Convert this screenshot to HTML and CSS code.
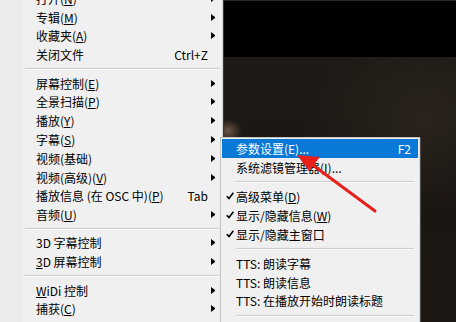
FILE: index.html
```html
<!DOCTYPE html>
<html>
<head>
<meta charset="utf-8">
<link rel="stylesheet" href="styles.css">
</head>
<body>
<div class="screen">
  <div class="gutter"></div>
  <div class="menu main">
    <div class="list">
      <div class="item"><span class="label">打开(<u>N</u>)</span><span class="sub-arrow"></span></div>
      <div class="item"><span class="label">专辑(<u>M</u>)</span><span class="sub-arrow"></span></div>
      <div class="item"><span class="label">收藏夹(<u>A</u>)</span><span class="sub-arrow"></span></div>
      <div class="item"><span class="label">关闭文件</span><span class="key">Ctrl+Z</span><span class="no-arrow"></span></div>
      <div class="sep"></div>
      <div class="item"><span class="label">屏幕控制(<u>E</u>)</span><span class="sub-arrow"></span></div>
      <div class="item"><span class="label">全景扫描(<u>P</u>)</span><span class="sub-arrow"></span></div>
      <div class="item"><span class="label">播放(<u>Y</u>)</span><span class="sub-arrow"></span></div>
      <div class="item"><span class="label">字幕(<u>S</u>)</span><span class="sub-arrow"></span></div>
      <div class="item"><span class="label">视频(基础)</span><span class="sub-arrow"></span></div>
      <div class="item"><span class="label">视频(高级)(<u>V</u>)</span><span class="sub-arrow"></span></div>
      <div class="item"><span class="label">播放信息 (在 OSC 中)(<u>P</u>)</span><span class="key">Tab</span><span class="no-arrow"></span></div>
      <div class="item"><span class="label">音频(<u>U</u>)</span><span class="sub-arrow"></span></div>
      <div class="sep"></div>
      <div class="item"><span class="label">3D 字幕控制</span><span class="sub-arrow"></span></div>
      <div class="item"><span class="label"><u>3</u>D 屏幕控制</span><span class="sub-arrow"></span></div>
      <div class="sep"></div>
      <div class="item"><span class="label"><u>W</u>iDi 控制</span><span class="sub-arrow"></span></div>
      <div class="item"><span class="label">捕获(<u>C</u>)</span><span class="sub-arrow"></span></div>
    </div>
  </div>
  <div class="video">
    <div class="video-top"></div>
    <div class="video-frame"></div>
  </div>

  <div class="menu sub">
    <div class="item active"><span class="check"></span><span class="label">参数设置(E)...</span><span class="key">F2</span></div>
    <div class="item"><span class="check"></span><span class="label">系统滤镜管理器(<u>I</u>)...</span></div>
    <div class="sep"></div>
    <div class="item"><span class="check"><svg viewBox="0 0 8 8" width="8" height="8"><path d="M0.8 4.2 L3 6.6 L7.4 0.8" fill="none" stroke="#000" stroke-width="1.6"/></svg></span><span class="label">高级菜单(<u>D</u>)</span></div>
    <div class="item"><span class="check"><svg viewBox="0 0 8 8" width="8" height="8"><path d="M0.8 4.2 L3 6.6 L7.4 0.8" fill="none" stroke="#000" stroke-width="1.6"/></svg></span><span class="label">显示/隐藏信息(<u>W</u>)</span></div>
    <div class="item"><span class="check"><svg viewBox="0 0 8 8" width="8" height="8"><path d="M0.8 4.2 L3 6.6 L7.4 0.8" fill="none" stroke="#000" stroke-width="1.6"/></svg></span><span class="label">显示/隐藏主窗口</span></div>
    <div class="sep"></div>
    <div class="item"><span class="check"></span><span class="label">TTS: 朗读字幕</span></div>
    <div class="item"><span class="check"></span><span class="label">TTS: 朗读信息</span></div>
    <div class="item"><span class="check"></span><span class="label">TTS: 在播放开始时朗读标题</span></div>
    <div class="sep"></div>
    <div class="tail"></div>
  </div>

  <svg class="red-arrow" width="456" height="322" viewBox="0 0 456 322">
    <line x1="375" y1="211" x2="310" y2="163" stroke="#e8201c" stroke-width="3" stroke-linecap="round"/>
    <polygon points="297,155 320,157 309,171" fill="#e8201c"/>
  </svg>
</div>
</body>
</html>
```

FILE: styles.css
```css
html, body {
  margin: 0;
  padding: 0;
}
body {
  width: 456px;
  height: 322px;
  overflow: hidden;
  font-family: "Noto Sans CJK SC", "Noto Sans", sans-serif;
  font-size: 12px;
  color: #000;
}
.screen {
  position: relative;
  display: flex;
  width: 456px;
  height: 322px;
  overflow: hidden;
  background: #e9e9e9;
}
.gutter {
  width: 22px;
  flex-shrink: 0;
  background: #ebebeb;
}
.menu.main {
  width: 200px;
  flex-shrink: 0;
  background: #f0f0f0;
  border-right: 1px solid #d4d4d4;
  overflow: hidden;
}
.main .list {
  margin-top: -11px;
}
.item {
  display: flex;
  align-items: center;
  height: 18.8px;
  white-space: nowrap;
}
.main .item {
  padding-left: 14px;
  padding-right: 7px;
}
.label {
  flex: 1;
}
u {
  text-decoration: underline;
  text-underline-offset: 1px;
}
.key {
  margin-right: -3px;
}
.sub-arrow, .no-arrow {
  width: 10px;
  height: 7px;
  display: flex;
  justify-content: flex-end;
}
.sub-arrow::after {
  content: "";
  border-left: 4px solid #000;
  border-top: 3.5px solid transparent;
  border-bottom: 3.5px solid transparent;
}
.sep {
  height: 9.5px;
  display: flex;
  align-items: center;
}
.main .sep {
  margin: 0 2px 0 3px;
}
.sep::before {
  content: "";
  flex: 1;
  height: 1px;
  background: #cfcfcf;
  box-shadow: 0 1px 0 #fafafa, 0 0 2px rgba(0,0,0,0.08);
}
.sub .sep {
  height: 10.5px;
  margin: 0 4px 0 14px;
}
.tail {
  height: 20px;
}
.video {
  flex: 1;
  display: flex;
  flex-direction: column;
  border-left: 1px solid #3a3a3a;
}
.video-top {
  height: 56px;
  background: #000;
  border-top: 1px solid #2a2a2a;
}
.video-frame {
  flex: 1;
  background:
    radial-gradient(ellipse 14px 12px at 4px 74px, #6a5546 0%, rgba(106,85,70,0) 100%),
    radial-gradient(ellipse 120px 90px at 200px 60px, #2a231d 0%, rgba(42,35,29,0) 100%),
    linear-gradient(180deg, #1f1a15 0%, #1a1612 60%, #1d1813 100%);
}
.menu.sub {
  position: absolute;
  left: 220px;
  top: 137px;
  width: 196px;
  padding: 1px 1px 4px 1px;
  background: #f0f0f0;
  border: 1px solid #c4c4c4;
  border-right-color: #d8d8d8;
  box-shadow: 1px 1px 0 #505050;
}
.sub .item {
  padding-right: 10px;
}
.sub .item.active {
  background: #0a78d7;
  color: #fff;
}
.check {
  width: 14px;
  flex-shrink: 0;
  display: flex;
  justify-content: center;
  padding-left: 1px;
  box-sizing: border-box;
}
.check svg {
  display: block;
}
.red-arrow {
  position: absolute;
  left: 0;
  top: 0;
  pointer-events: none;
}
```
